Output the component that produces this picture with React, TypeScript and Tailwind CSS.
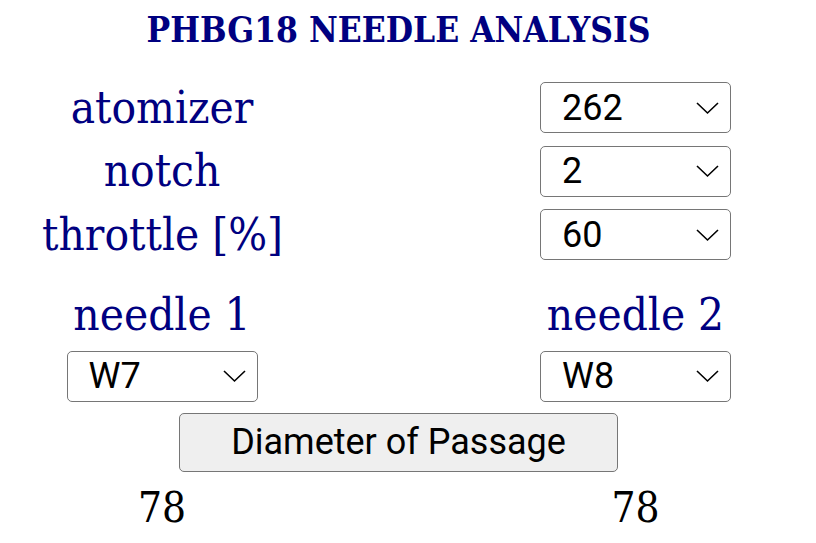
const serif = "font-['DejaVu_Serif','Liberation_Serif',serif] font-stretch-condensed";
const sans = "font-['Roboto','Liberation_Sans',sans-serif]";

function Chevron() {
  return (
    <svg
      width="23"
      height="13"
      viewBox="0 0 23 13"
      fill="none"
      stroke="currentColor"
      strokeWidth="1.6"
      className="absolute right-[12px] top-1/2 -translate-y-1/2 text-black pointer-events-none"
    >
      <polyline points="1,1.5 11.5,11.5 22,1.5" />
    </svg>
  );
}

function Select({ value, options }: { value: string; options: string[] }) {
  return (
    <div className="relative w-[191px] h-[51px]">
      <select
        defaultValue={value}
        className={`${sans} appearance-none w-full h-full pl-[21px] pr-10 text-[36px] leading-none text-black bg-white border-[1.5px] border-[#767676] rounded-[5px] outline-none`}
      >
        {options.map((o) => (
          <option key={o}>{o}</option>
        ))}
      </select>
      <Chevron />
    </div>
  );
}

function Label({ children }: { children: React.ReactNode }) {
  return (
    <div className={`${serif} text-[45.5px] leading-none text-[#000080] text-center whitespace-nowrap`}>
      {children}
    </div>
  );
}

export default function App() {
  return (
    <div className="w-[816px] h-[543px] bg-white overflow-hidden">
      <div className="w-[797px]">
        <h1
          className={`${serif} text-center font-bold text-[35px] leading-none text-[#000080] pt-[12px]`}
        >
          PHBG18 NEEDLE ANALYSIS
        </h1>

        {/* settings */}
        <div className="grid grid-cols-[240px_258px_191px] pl-[42px] mt-[35px] gap-y-[12.5px] items-center">
          <Label>atomizer</Label>
          <div />
          <Select value="262" options={["246", "254", "262", "270"]} />

          <Label>notch</Label>
          <div />
          <Select value="2" options={["1", "2", "3", "4", "5"]} />

          <Label>throttle [%]</Label>
          <div />
          <Select value="60" options={["20", "40", "60", "80", "100"]} />
        </div>

        {/* needles */}
        <div className="grid grid-cols-[240px_258px_191px] pl-[42px] mt-[32px] items-center">
          <Label>needle 1</Label>
          <div />
          <Label>needle 2</Label>

          <div className="flex justify-center mt-[13px]">
            <Select value="W7" options={["W6", "W7", "W8", "W9"]} />
          </div>
          <div />
          <div className="mt-[13px]">
            <Select value="W8" options={["W6", "W7", "W8", "W9"]} />
          </div>
        </div>

        <div className="flex justify-center mt-[11px]">
          <button
            className={`${sans} w-[439px] h-[59px] bg-[#efefef] border-[1.5px] border-[#767676] rounded-[5px] text-[36px] leading-none text-black`}
          >
            Diameter of Passage
          </button>
        </div>

        <div className="grid grid-cols-[240px_258px_191px] pl-[42px] mt-[15px]">
          <div className={`${serif} text-[42px] leading-none text-black text-center`}>78</div>
          <div />
          <div className={`${serif} text-[42px] leading-none text-black text-center`}>78</div>
        </div>
      </div>
    </div>
  );
}
